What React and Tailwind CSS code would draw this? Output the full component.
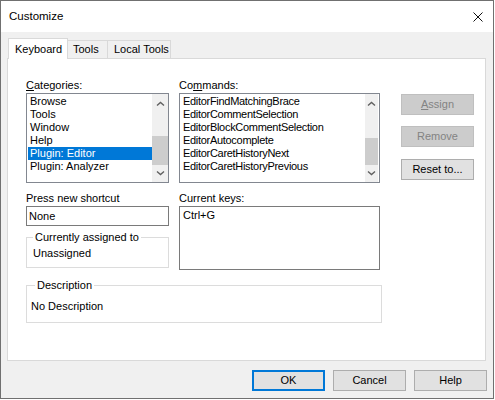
import React from 'react';

const categories = ['Browse', 'Tools', 'Window', 'Help', 'Plugin: Editor', 'Plugin: Analyzer'];
const commands = [
  'EditorFindMatchingBrace',
  'EditorCommentSelection',
  'EditorBlockCommentSelection',
  'EditorAutocomplete',
  'EditorCaretHistoryNext',
  'EditorCaretHistoryPrevious',
];

const Chevron = ({ down }) => (
  <svg width="9" height="6" viewBox="0 0 9 6" className="block">
    <path
      d={down ? 'M1 1.5 L4.5 4.5 L8 1.5' : 'M1 4.5 L4.5 1.5 L8 4.5'}
      fill="none"
      stroke="#606060"
      strokeWidth="1.4"
    />
  </svg>
);

// scrollbar drawn inside listboxes
const ScrollBar = ({ width, thumbTop, thumbHeight }) => (
  <div className={`relative h-full bg-[#f0f0f0] ${width}`}>
    <div className="absolute top-[7px] left-0 right-0 flex justify-center">
      <Chevron />
    </div>
    <div
      className="absolute left-0 right-0 bg-[#cdcdcd]"
      style={{ top: thumbTop, height: thumbHeight }}
    />
    <div className="absolute bottom-[6px] left-0 right-0 flex justify-center">
      <Chevron down />
    </div>
  </div>
);

const Button = ({ children, disabled, primary, className = '' }) => (
  <div
    className={`flex items-center justify-center w-[73px] h-[21px] text-[11px] ${
      disabled
        ? 'bg-[#cccccc] border border-[#bfbfbf] text-[#838383]'
        : primary
        ? 'bg-[#e1e1e1] border-2 border-[#0078d7] text-black'
        : 'bg-[#e1e1e1] border border-[#adadad] text-black'
    } ${className}`}
  >
    {children}
  </div>
);

export default function App() {
  return (
    <div className="w-[494px] h-[399px] border border-[#707070] bg-[#f0f0f0] flex flex-col font-['Liberation_Sans',Arial,sans-serif] text-[11px] text-black leading-[13px]">
      {/* title bar */}
      <div className="h-[31px] bg-white flex items-center justify-between pl-[8px] pr-[10px]">
        <span className="text-[11.5px]">Customize</span>
        <svg width="10" height="10" viewBox="0 0 10 10">
          <path d="M0.5 0.5 L9.5 9.5 M9.5 0.5 L0.5 9.5" stroke="#111" strokeWidth="1" />
        </svg>
      </div>

      {/* tabs */}
      <div className="mt-[6px] ml-[7px] flex items-end h-[20px]">
        <div className="relative z-10 -mb-[1px] h-[21px] w-[60px] bg-white border-l border-t border-r border-[#d9d9d9] flex items-center pl-[6px]">
          Keyboard
        </div>
        <div className="h-[18px] w-[40px] border-t border-r border-[#d9d9d9] flex items-center pl-[5px]">
          Tools
        </div>
        <div className="h-[18px] w-[63px] border-t border-r border-[#d9d9d9] flex items-center pl-[6px]">
          Local Tools
        </div>
      </div>

      {/* panel */}
      <div className="ml-[6px] w-[479px] h-[303px] bg-white border border-[#d9d9d9] pt-[20px] pl-[18px]">
        <div className="flex">
          {/* left column */}
          <div className="w-[143px] flex flex-col">
            <div className="h-[13px]">
              <span className="underline">C</span>ategories:
            </div>
            <div className="mt-[1px] h-[90px] border border-[#828790] flex">
              <div className="flex-1 pt-[1px] pl-[1px]">
                {categories.map((c) => (
                  <div
                    key={c}
                    className={`h-[13px] pl-[2px] ${c === 'Plugin: Editor' ? 'bg-[#0078d7] text-white' : ''}`}
                  >
                    {c}
                  </div>
                ))}
              </div>
              <ScrollBar width="w-[16px]" thumbTop={42} thumbHeight={29} />
            </div>
            <div className="mt-[9px] h-[13px]">Press new shortcut</div>
            <div className="mt-[1px] h-[20px] border border-[#7a7a7a] flex items-center pl-[2px]">None</div>
            <div className="relative mt-[11px] h-[31px] border border-[#dcdcdc] pt-[9px] pl-[6px]">
              <span className="absolute -top-[7px] left-[6px] bg-white px-[2px]">Currently assigned to</span>
              Unassigned
            </div>
          </div>

          {/* middle column */}
          <div className="ml-[10px] w-[201px] flex flex-col">
            <div className="h-[13px]">
              Co<span className="underline">m</span>mands:
            </div>
            <div className="mt-[1px] h-[90px] border border-[#828790] flex">
              <div className="flex-1 pt-[1px] pl-[3px] tracking-[-0.3px]">
                {commands.map((c) => (
                  <div key={c} className="h-[13px]">
                    {c}
                  </div>
                ))}
              </div>
              <ScrollBar width="w-[13px] mr-[1px]" thumbTop={44} thumbHeight={27} />
            </div>
            <div className="mt-[9px] h-[13px]">Current keys:</div>
            <div className="mt-[1px] h-[64px] border border-[#7a7a7a] pl-[3px] pt-[2px]">Ctrl+G</div>
          </div>

          {/* buttons */}
          <div className="ml-[21px] flex flex-col">
            <Button disabled className="mt-[15px]">
              <span>
                <span className="underline">A</span>ssign
              </span>
            </Button>
            <Button disabled className="mt-[11px]">
              Remove
            </Button>
            <Button className="mt-[12px]">Reset to...</Button>
          </div>
        </div>

        {/* description */}
        <div className="relative mt-[15px] w-[356px] h-[38px] border border-[#dcdcdc] pt-[14px] pl-[4px]">
          <span className="absolute -top-[7px] left-[8px] bg-white px-[2px]">Description</span>
          No Description
        </div>
      </div>

      {/* footer buttons */}
      <div className="mt-[9px] flex justify-end gap-[8px] pr-[6px]">
        <Button primary>OK</Button>
        <Button>Cancel</Button>
        <Button>Help</Button>
      </div>
    </div>
  );
}
